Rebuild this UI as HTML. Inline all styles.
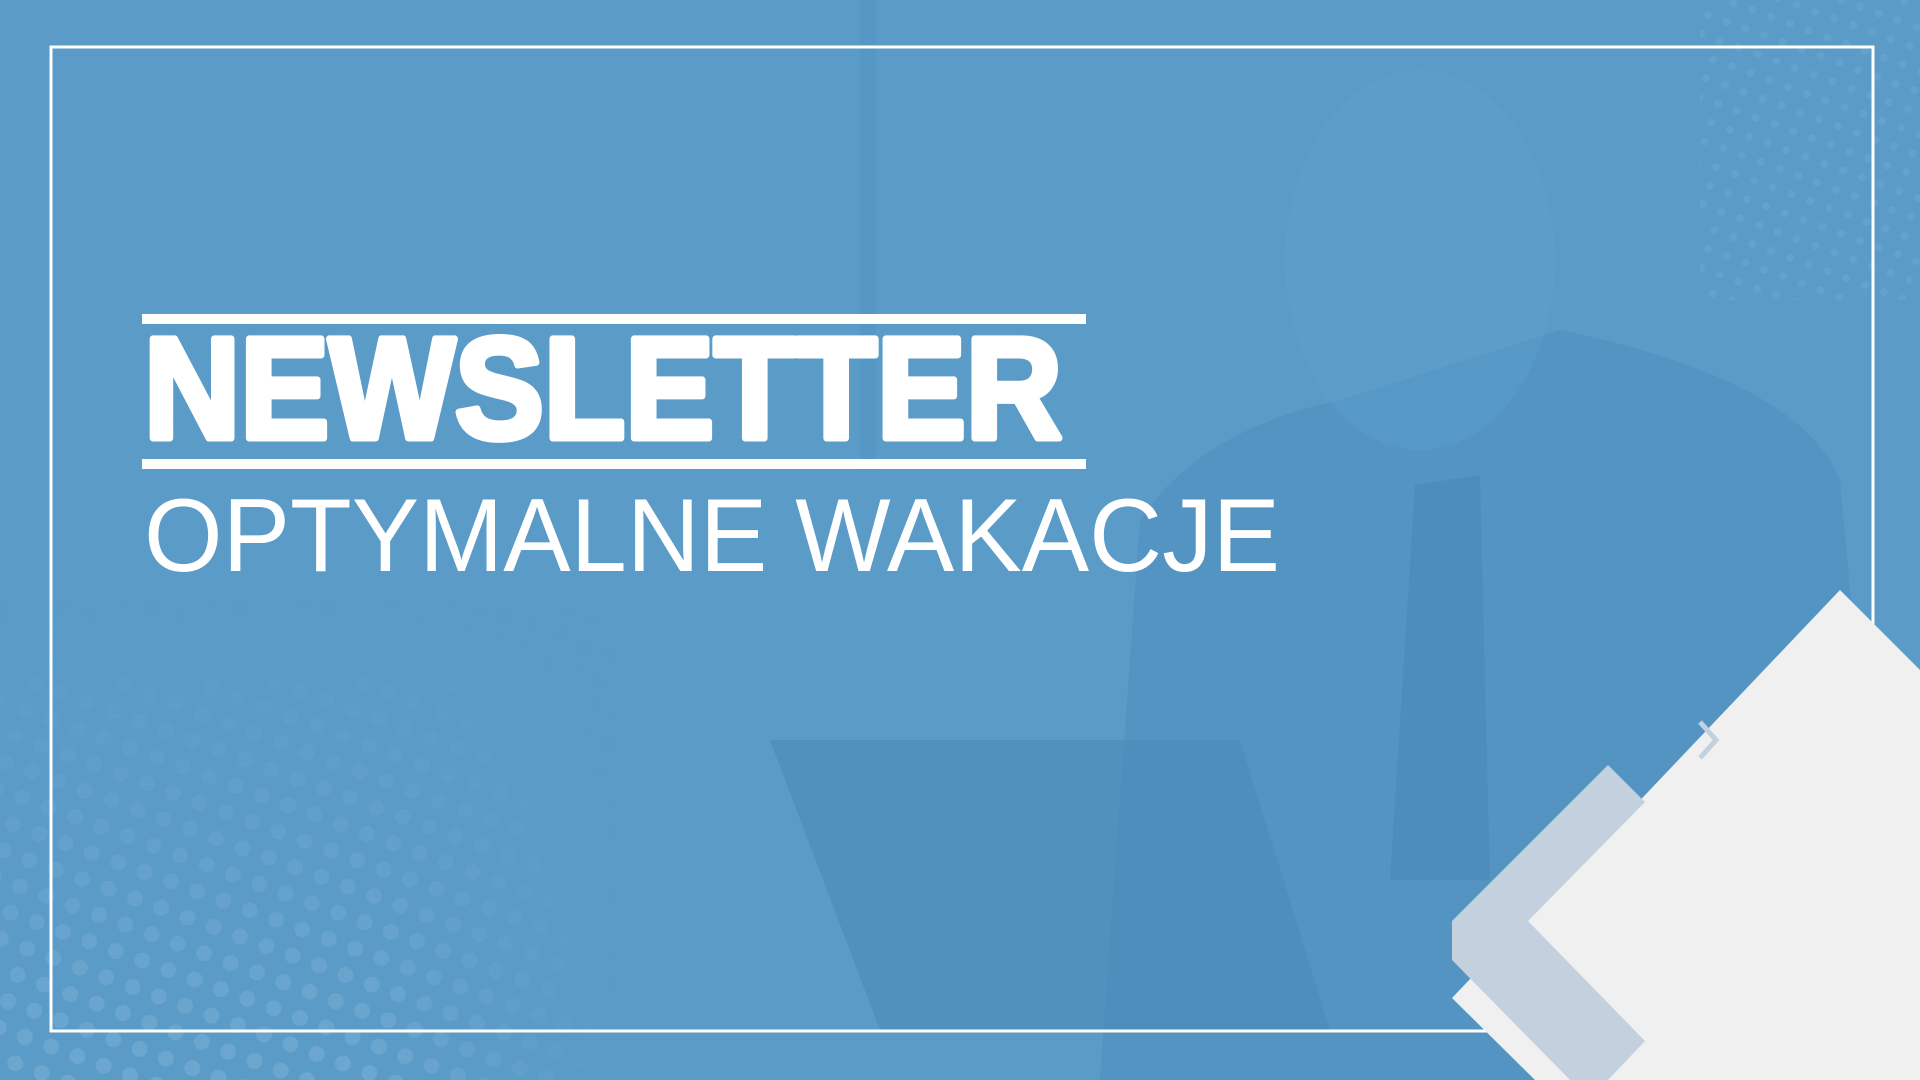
<!DOCTYPE html>
<html><head><meta charset="utf-8"><style>
html,body{margin:0;padding:0;width:1920px;height:1080px;overflow:hidden;background:#5a9bc8}
svg{display:block}
</style></head><body>
<svg width="1920" height="1080" viewBox="0 0 1920 1080" xmlns="http://www.w3.org/2000/svg">
<defs>
<pattern id="dots" width="28" height="28" patternUnits="userSpaceOnUse" patternTransform="rotate(20)">
<circle cx="14" cy="14" r="8" fill="#80b3d7" fill-opacity="0.5"/>
</pattern>
<pattern id="dots2" width="20" height="20" patternUnits="userSpaceOnUse" patternTransform="rotate(20)">
<circle cx="10" cy="10" r="4" fill="#80b3d7" fill-opacity="0.4"/>
</pattern>
<linearGradient id="fade" x1="0" y1="0" x2="0" y2="1">
<stop offset="0" stop-color="#fff" stop-opacity="0"/><stop offset="1" stop-color="#fff" stop-opacity="1"/>
</linearGradient>
<linearGradient id="fadex" x1="0" y1="0" x2="1" y2="0">
<stop offset="0.6" stop-color="#fff" stop-opacity="1"/><stop offset="1" stop-color="#fff" stop-opacity="0"/>
</linearGradient>
<mask id="m1"><rect x="0" y="600" width="620" height="480" fill="url(#fade)"/></mask>
<mask id="m2"><rect x="0" y="600" width="620" height="480" fill="url(#fadex)"/></mask>
</defs>
<rect width="1920" height="1080" fill="#5a9bc8"/>
<path d="M1140 520 Q1200 430 1340 400 L1560 330 Q1800 380 1840 480 L1860 700 L1700 1080 L1100 1080 Z" fill="#4c8bba" opacity="0.45"/>
<ellipse cx="1420" cy="260" rx="135" ry="190" fill="#5e9fcc" opacity="0.4"/>
<path d="M1415 485 L1480 475 L1490 880 L1390 880 Z" fill="#4a89b8" opacity="0.6"/>
<path d="M770 740 L1240 740 L1330 1030 L880 1030 Z" fill="#4b8ab8" opacity="0.6"/>
<rect x="860" y="0" width="16" height="470" fill="#4e8fbf" opacity="0.35"/>
<g mask="url(#m2)"><rect x="0" y="600" width="620" height="480" fill="url(#dots)" mask="url(#m1)"/></g>
<rect x="1700" y="0" width="220" height="300" fill="url(#dots2)" opacity="0.7"/>
<rect x="51" y="47" width="1822" height="984" fill="none" stroke="#fff" stroke-width="3"/>
<polygon points="1840,590 1960,710 1960,1080 1535,1080 1452,998" fill="#f0f0f0"/>
<polygon points="1452,921 1608,765 1645,802 1528,921 1645,1041 1608,1080 1570,1080 1452,960" fill="#c3d1df"/>
<polyline points="1700,722 1716,740 1700,758" fill="none" stroke="#c3d1df" stroke-width="5"/>
<rect x="142" y="314" width="944" height="10" fill="#fff"/>
<rect x="142" y="459" width="944" height="10" fill="#fff"/>
<text x="144" y="438" font-family="Liberation Sans, sans-serif" font-weight="bold" font-size="144" fill="#fff" stroke="#fff" stroke-width="7" stroke-linejoin="round" textLength="918" lengthAdjust="spacingAndGlyphs">NEWSLETTER</text>
<text x="144" y="571" font-family="Liberation Sans, sans-serif" font-size="104" fill="#fff" textLength="1136" lengthAdjust="spacingAndGlyphs">OPTYMALNE WAKACJE</text>
</svg>
</body></html>
